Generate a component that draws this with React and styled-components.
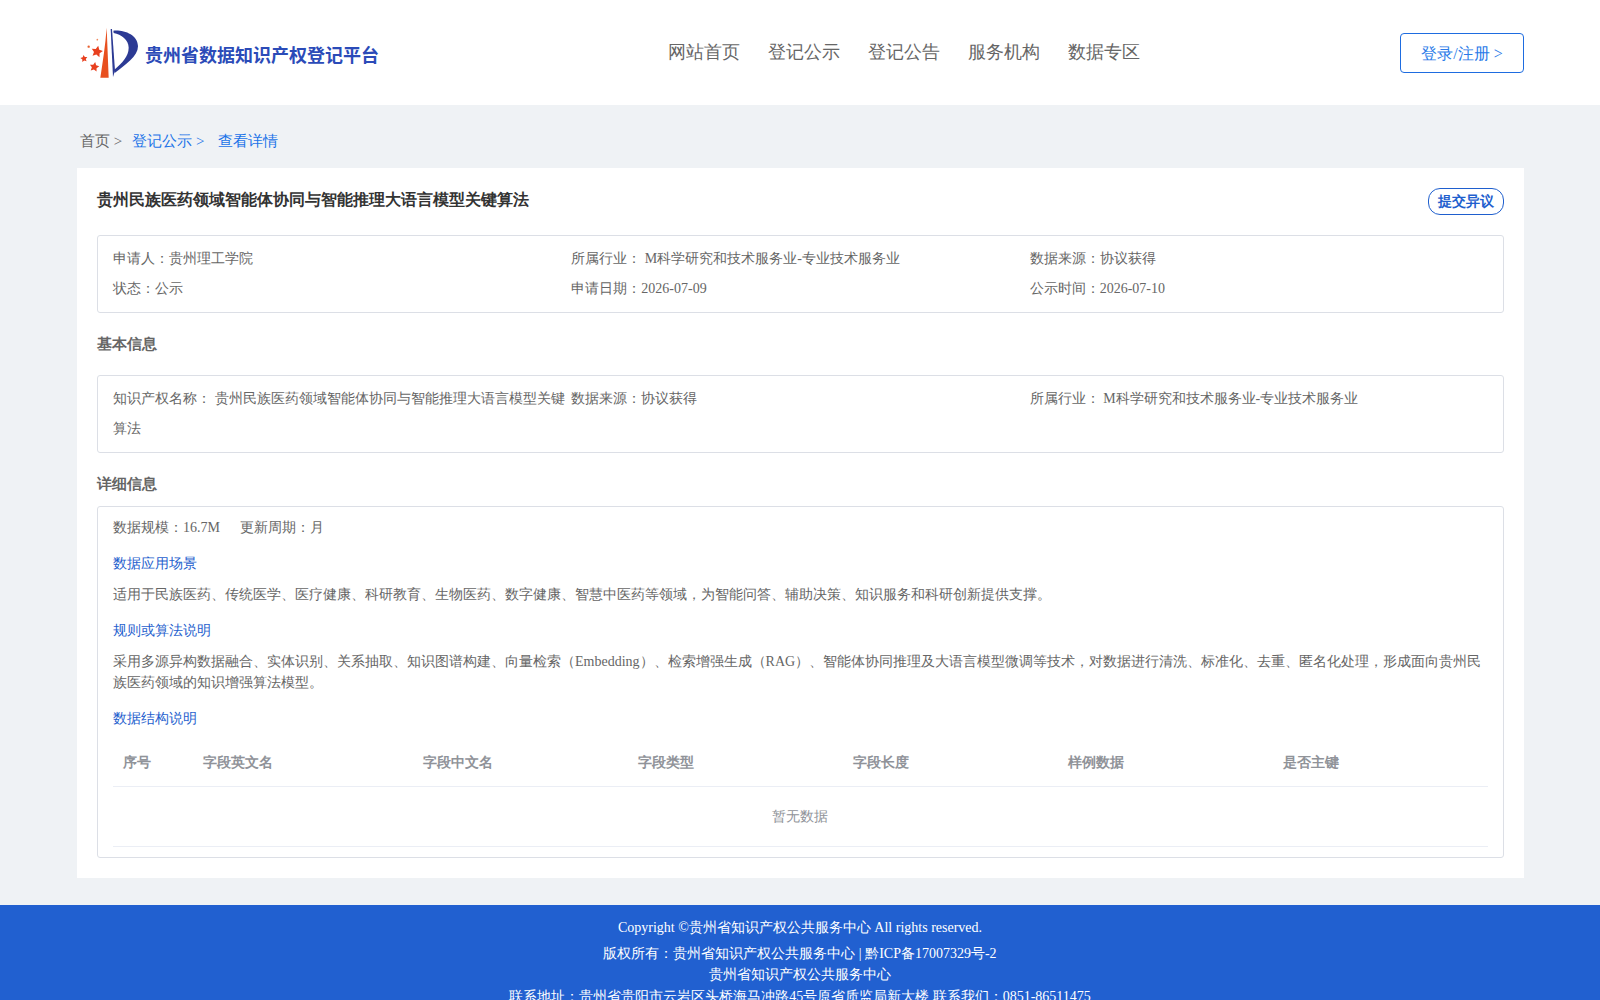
import React from "react";
import styled, { createGlobalStyle } from "styled-components";

const Global = createGlobalStyle`
  html, body { margin: 0; padding: 0; height: 1000px; overflow: hidden; background: #eff2f5; }
  body { font-family: "Liberation Serif", serif; color: #666; }
  * { box-sizing: border-box; }
`;

const Header = styled.header`
  height: 105px;
  background: #fff;
  padding: 0 76px;
  display: grid;
  grid-template-columns: 592px auto 1fr;
  align-items: center;
`;
const Brand = styled.div`
  display: flex;
  align-items: center;
  gap: 3px;
  margin-left: -4px;
`;
const LogoMark = styled.svg`
  flex: none;
  margin-top: -3px;
`;
const BrandName = styled.span`
  font-size: 18px;
  font-weight: 700;
  color: #2b4bb8;
  font-family: "Noto Sans CJK SC", sans-serif;
  margin-top: 3px;
`;
const Nav = styled.nav`
  display: flex;
  gap: 28px;
  margin-top: -1px;
`;
const NavItem = styled.a`
  font-size: 18px;
  color: #666;
`;
const LoginCell = styled.div`
  display: flex;
  justify-content: flex-end;
`;
const Login = styled.button`
  width: 124px;
  height: 40px;
  background: #fff;
  border: 1px solid #1e6ce0;
  border-radius: 4px;
  color: #2b7be8;
  font: 16px "Liberation Serif", serif;
  padding: 3px 0 0;
`;

const Crumbs = styled.div`
  height: 63px;
  padding: 27px 0 0 80px;
  font-size: 15px;
  line-height: 18px;
  display: flex;
  color: #666;
`;
const CrumbLink = styled.span`
  color: #1a73e8;
  margin-left: ${(p) => p.$gap}px;
`;

const Card = styled.main`
  margin: 0 76px 0 77px;
  height: 710px;
  background: #fff;
  padding: 20px;
`;
const TitleRow = styled.div`
  display: flex;
  justify-content: space-between;
  align-items: flex-start;
  height: 47px;
`;
const Title = styled.h1`
  margin: 0;
  font-size: 16px;
  line-height: 24px;
  font-weight: 700;
  color: #333;
`;
const Dissent = styled.button`
  width: 76px;
  height: 27px;
  border: 1px solid #1f5fce;
  border-radius: 12px;
  background: #fff;
  color: #1f5fce;
  font: 700 14px "Liberation Serif", serif;
  padding: 0;
`;
const Panel = styled.section`
  border: 1px solid #dcdfe6;
  border-radius: 3px;
  padding: ${(p) => p.$pad || "8px 15px"};
  font-size: 14px;
`;
const InfoGrid = styled.div`
  display: grid;
  grid-template-columns: repeat(3, 1fr);
`;
const Cell = styled.div`
  line-height: 30px;
  padding-right: 6px;
  color: #666;
`;
const Section = styled.h2`
  margin: ${(p) => p.$mt}px 0 ${(p) => p.$mb}px;
  font-size: 15px;
  line-height: 20px;
  font-weight: 700;
  color: #666;
`;
const MetaRow = styled.div`
  display: flex;
  gap: 20px;
  line-height: 20px;
  color: #666;
`;
const SubHead = styled.div`
  margin-top: ${(p) => p.$mt}px;
  line-height: 20px;
  color: #1f5fce;
`;
const Para = styled.p`
  margin: 10px 0 0;
  line-height: 21px;
  color: #666;
`;
const Table = styled.div`
  margin-top: 10px;
`;
const HeadRow = styled.div`
  display: grid;
  grid-template-columns: 80px 220px repeat(5, 215px);
  height: 48px;
  align-items: center;
  border-bottom: 1px solid #ebeef5;
  padding-left: 10px;
`;
const HeadCell = styled.div`
  font-weight: 700;
  color: #909399;
`;
const Empty = styled.div`
  height: 60px;
  line-height: 60px;
  text-align: center;
  color: #909399;
  border-bottom: 1px solid #ebeef5;
  padding-right: 1px;
`;
const Footer = styled.footer`
  margin-top: 27px;
  height: 95px;
  background: #2160d0;
  color: #fff;
  text-align: center;
  font-size: 14px;
  padding-top: 12px;
`;
const FooterLine = styled.div`
  line-height: 21.5px;
  margin-bottom: ${(p) => p.$mb || 0}px;
`;

const Star = ({ cx, cy, r, rot = 0, fill = "#e8401f" }) => {
  const pts = [];
  for (let i = 0; i < 10; i++) {
    const rad = i % 2 === 0 ? r : r * 0.5;
    const a = (Math.PI / 5) * i - Math.PI / 2 + (rot * Math.PI) / 180;
    pts.push(`${(cx + rad * Math.cos(a)).toFixed(1)},${(cy + rad * Math.sin(a)).toFixed(1)}`);
  }
  return <polygon points={pts.join(" ")} fill={fill} />;
};

const Logo = () => (
  <LogoMark width="70" height="64" viewBox="0 0 210 192">
    <path d="M104 26 L110 176 L85 176 C92 130 100 80 104 26 Z" fill="#e8501f" />
    <path d="M116 30 L120 30 L129 155 L123 174 Z" fill="#2c3a94" />
    <path d="M124 35 C154 32 198 46 198 82 C198 112 160 138 128 162 L127 152 C150 132 170 112 170 86 C170 62 148 47 125 42 Z" fill="#2c3a94" />
    <Star cx={75} cy={98} r={18} rot={12} />
    <Star cx={36} cy={119} r={11} rot={-8} />
    <Star cx={67} cy={144} r={15} rot={10} />
    <circle cx="50" cy="83" r="3.5" fill="#e8602f" />
    <circle cx="76" cy="62" r="2.5" fill="#ef8a5f" />
  </LogoMark>
);

const navItems = ["网站首页", "登记公示", "登记公告", "服务机构", "数据专区"];
const columns = ["序号", "字段英文名", "字段中文名", "字段类型", "字段长度", "样例数据", "是否主键"];

export default function App() {
  return (
    <>
      <Global />
      <Header>
        <Brand>
          <Logo />
          <BrandName>贵州省数据知识产权登记平台</BrandName>
        </Brand>
        <Nav>
          {navItems.map((n) => (
            <NavItem key={n}>{n}</NavItem>
          ))}
        </Nav>
        <LoginCell>
          <Login>登录/注册 &gt;</Login>
        </LoginCell>
      </Header>
      <Crumbs>
        首页 &gt;
        <CrumbLink $gap={10}>登记公示 &gt;</CrumbLink>
        <CrumbLink $gap={14}>查看详情</CrumbLink>
      </Crumbs>
      <Card>
        <TitleRow>
          <Title>贵州民族医药领域智能体协同与智能推理大语言模型关键算法</Title>
          <Dissent>提交异议</Dissent>
        </TitleRow>
        <Panel>
          <InfoGrid>
            <Cell>申请人：贵州理工学院</Cell>
            <Cell>所属行业： M科学研究和技术服务业-专业技术服务业</Cell>
            <Cell>数据来源：协议获得</Cell>
            <Cell>状态：公示</Cell>
            <Cell>申请日期：2026-07-09</Cell>
            <Cell>公示时间：2026-07-10</Cell>
          </InfoGrid>
        </Panel>
        <Section $mt={21} $mb={21}>基本信息</Section>
        <Panel>
          <InfoGrid>
            <Cell>知识产权名称： 贵州民族医药领域智能体协同与智能推理大语言模型关键算法</Cell>
            <Cell>数据来源：协议获得</Cell>
            <Cell>所属行业： M科学研究和技术服务业-专业技术服务业</Cell>
          </InfoGrid>
        </Panel>
        <Section $mt={21} $mb={12}>详细信息</Section>
        <Panel $pad="11px 15px 10px">
          <MetaRow>
            <span>数据规模：16.7M</span>
            <span>更新周期：月</span>
          </MetaRow>
          <SubHead $mt={16}>数据应用场景</SubHead>
          <Para>适用于民族医药、传统医学、医疗健康、科研教育、生物医药、数字健康、智慧中医药等领域，为智能问答、辅助决策、知识服务和科研创新提供支撑。</Para>
          <SubHead $mt={16}>规则或算法说明</SubHead>
          <Para>采用多源异构数据融合、实体识别、关系抽取、知识图谱构建、向量检索（Embedding）、检索增强生成（RAG）、智能体协同推理及大语言模型微调等技术，对数据进行清洗、标准化、去重、匿名化处理，形成面向贵州民族医药领域的知识增强算法模型。</Para>
          <SubHead $mt={16}>数据结构说明</SubHead>
          <Table>
            <HeadRow>
              {columns.map((c) => (
                <HeadCell key={c}>{c}</HeadCell>
              ))}
            </HeadRow>
            <Empty>暂无数据</Empty>
          </Table>
        </Panel>
      </Card>
      <Footer>
        <FooterLine $mb={4}>Copyright ©贵州省知识产权公共服务中心 All rights reserved.</FooterLine>
        <FooterLine>版权所有：贵州省知识产权公共服务中心 | 黔ICP备17007329号-2</FooterLine>
        <FooterLine>贵州省知识产权公共服务中心</FooterLine>
        <FooterLine>联系地址：贵州省贵阳市云岩区头桥海马冲路45号原省质监局新大楼 联系我们：0851-86511475</FooterLine>
      </Footer>
    </>
  );
}
